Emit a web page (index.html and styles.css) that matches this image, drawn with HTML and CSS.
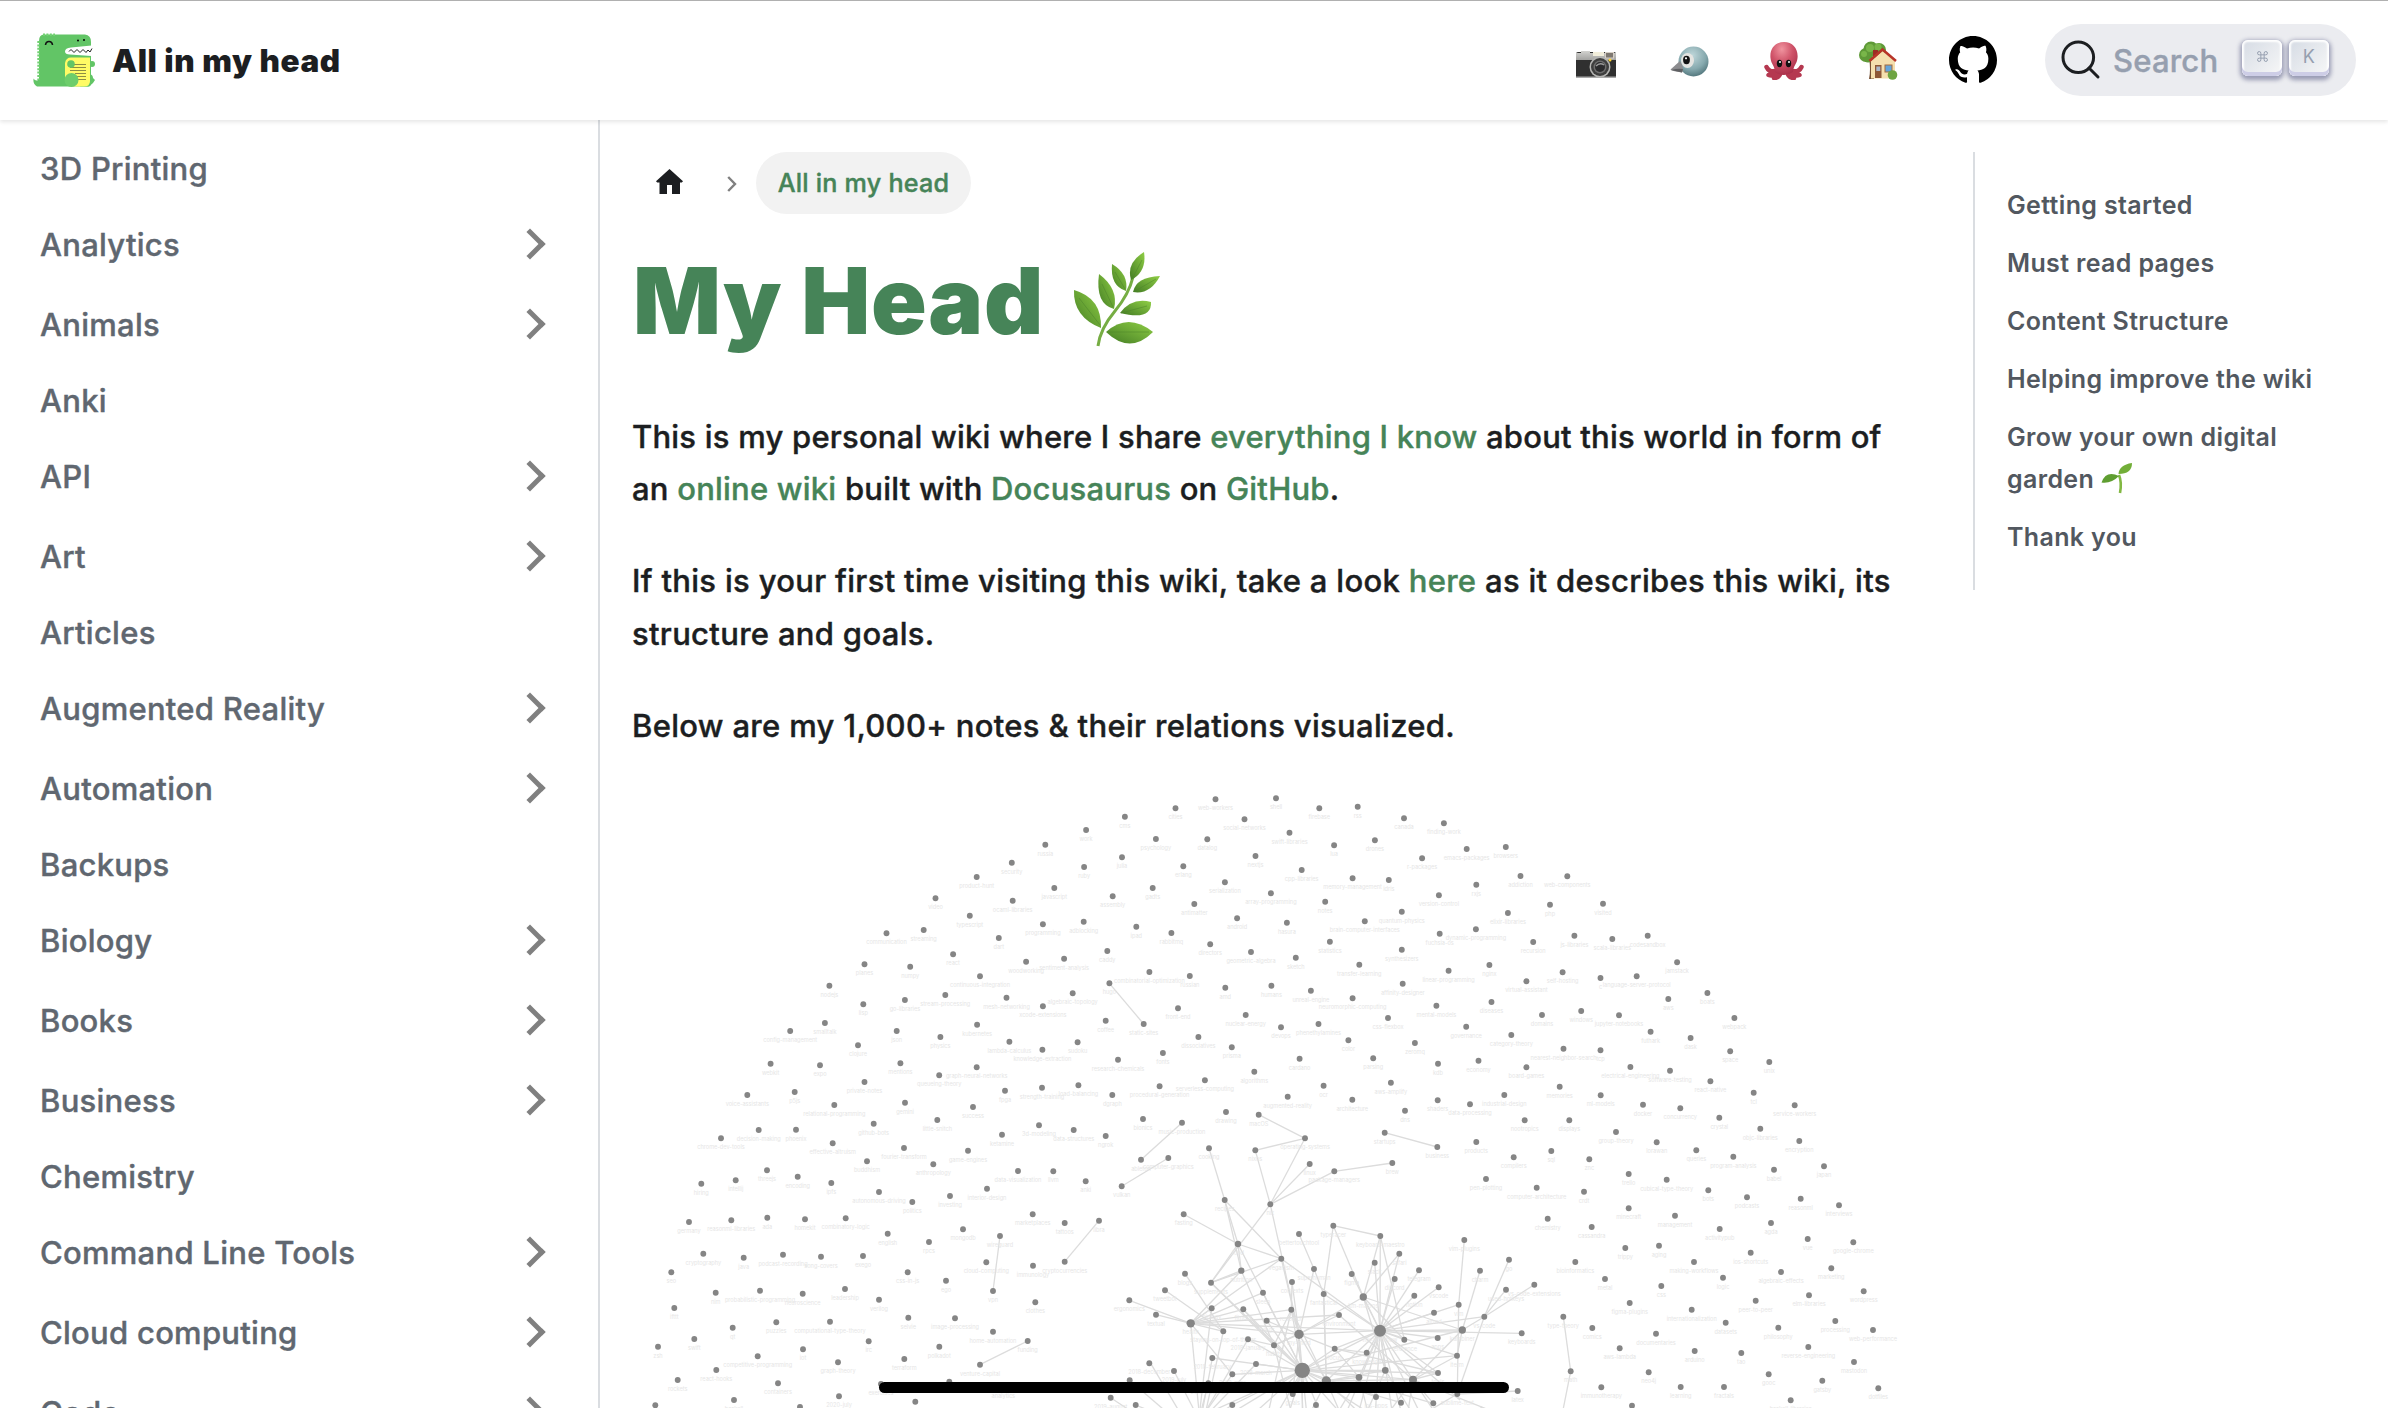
FILE: index.html
```html
<!DOCTYPE html>
<html lang="en">
<head>
<meta charset="utf-8">
<title>All in my head</title>
<link rel="stylesheet" href="styles.css">
</head>
<body>
<header class="navbar">
  <a class="brand">
    <svg class="brand-logo" viewBox="0 0 62 54">
      <path d="M4 53.500C1 52 0 49 .5 45.500C2 47.500 4 48.500 6 46V8Q6 1.500 11 1.500H52Q58 2 58 9V52Q57 53.500 54 53.500Z" fill="#62c566"/>
      <path d="M5.500 8V47M10 1.700H22" fill="none" stroke="#72d172" stroke-width="2.400" stroke-dasharray="2 1.400"/>
      <path d="M58.500 12.500 38 14.500Q32 15 32 18.500Q32 21.500 37 21.500L58.500 23Z" fill="#fff"/>
      <path d="M36 18.500 38 16.500 41 19.500 44 16.500 47 19.500 50 16.500 53 19.500 55 17 57 19 59 15.500" fill="none" stroke="#222" stroke-width="1"/>
      <path d="M12.500 12Q13 8.500 16 8.500T19.500 12" fill="none" stroke="#111" stroke-width="1.600"/>
      <circle cx="45" cy="7.500" r="1"/><circle cx="51" cy="7" r="1"/>
      <circle cx="59" cy="31" r="3" fill="#62c566"/>
      <path d="M57 41Q60 42 60 45L62 47 60 50 56 53.500H47Z" fill="#62c566"/>
      <path d="M32 30Q33 24.500 38 24.500H57V48Q57 53.500 51 53.500H41Q34 53 32 46Z" fill="#fffb65"/>
      <path d="M36 31.500H53M37 34.500H53M37 37.500H53M42 40.500H53M44 43.500H53M45 46.500H53" stroke="#8d8d43" stroke-width="1.100"/>
      <circle cx="38" cy="31" r="3.800" fill="#62c566"/>
      <circle cx="38.500" cy="47" r="7" fill="#6dcd6b"/>
    </svg>
    <span class="brand-title">All in my head</span>
  </a>
  <nav class="nav-links">
    <svg class="emoji" viewBox="0 0 40 40">
      <defs><linearGradient id="silver" x2="0" y2="1"><stop stop-color="#d2d2cf"/><stop offset="1" stop-color="#a3a3a1"/></linearGradient></defs>
      <path d="M0 14Q0 12 2 12H38Q40 12 40 14V38H0Z" fill="#303030"/>
      <path d="M0 20V13H5V11H14V13H40V20Z" fill="url(#silver)"/>
      <path d="M0 37.200H40" stroke="#aaa" stroke-width="1.600"/>
      <rect x="17" y="12" width="11" height="4" fill="#f2eedb"/><rect x="29.500" y="12.500" width="8" height="5.500" fill="#7d7770" stroke="#d6cfc6"/>
      <circle cx="34" cy="20" r="1.500" fill="#ffd52f"/>
      <circle cx="24" cy="27" r="10.500" fill="#b5b5b3"/><circle cx="24" cy="27" r="9" fill="#3e3e3e"/><circle cx="24" cy="27" r="6.500" fill="#6e6e6e"/><circle cx="24" cy="27" r="5" fill="#2b2b2d"/>
      <path d="M20 26Q24 22 28 25" fill="none" stroke="#9b9b9b" stroke-width="1.500"/>
    </svg>
    <svg class="emoji" viewBox="0 0 40 40">
      <defs><radialGradient id="bird" cx=".45" cy=".3" r=".7"><stop stop-color="#bfd7da"/><stop offset=".65" stop-color="#86a9ae"/><stop offset="1" stop-color="#55797f"/></radialGradient></defs>
      <circle cx="23.500" cy="21.500" r="15" fill="url(#bird)"/>
      <path d="M10 21 .5 29.500Q1 31 12 32.500Q15 28 10 21Z" fill="#8c8c8f"/><path d="M1 30Q8 28 13 29L12 32.500Z" fill="#5f6063"/>
      <ellipse cx="17.500" cy="20.500" rx="6.500" ry="7.500" fill="#e4e4e1"/><ellipse cx="16.500" cy="20" rx="3.400" ry="4.200" fill="#111"/><circle cx="16" cy="18.300" r="1.100" fill="#fff"/>
    </svg>
    <svg class="emoji" viewBox="0 0 40 40">
      <defs><radialGradient id="octo" cx=".42" cy=".22" r=".8"><stop stop-color="#f0949f"/><stop offset=".5" stop-color="#cf5268"/><stop offset="1" stop-color="#a92f49"/></radialGradient></defs>
      <g fill="none" stroke="#b53850" stroke-linecap="round" stroke-width="4.500"><path d="M14 30Q6 34 2.500 27M26 30Q34 34 37.500 27M14 31Q10 37 4.500 35M26 31Q30 37 35.500 35M17 31Q16 38 10 38M23 31Q24 38 30 38"/></g>
      <path d="M20 2C11 2 5.500 9 6.500 18C7 24 11 26 11 32Q20 38 29 32C29 26 33 24 33.500 18C34.500 9 29 2 20 2Z" fill="url(#octo)"/>
      <ellipse cx="15.500" cy="23.500" rx="2.700" ry="3.700" fill="#111"/><ellipse cx="24.500" cy="23.500" rx="2.700" ry="3.700" fill="#111"/><circle cx="16" cy="22" r="1" fill="#fff"/><circle cx="25" cy="22" r="1" fill="#fff"/>
    </svg>
    <svg class="emoji" viewBox="0 0 40 40">
      <path d="M11 18H16V39H11Q13 30 11 18Z" fill="#765034"/>
      <g fill="#5f9a38"><circle cx="8" cy="15" r="7"/><circle cx="13" cy="9" r="7.500"/><circle cx="21" cy="10" r="7"/><circle cx="10" cy="18" r="4.500"/></g>
      <g fill="#79b64a"><circle cx="12" cy="8" r="4"/><circle cx="20" cy="7" r="3.500"/><circle cx="6" cy="14" r="3"/></g>
      <rect x="15" y="10" width="5" height="8" fill="#9b2c24"/>
      <path d="M13 21 24.500 11 37 21V38.500H13Z" fill="#f4dfae"/>
      <path d="M11.500 21 24.500 9.500 38 21" fill="none" stroke="#b83428" stroke-width="2.500"/>
      <rect x="17" y="25" width="6.500" height="13" fill="#8d5736"/><rect x="18.300" y="26.500" width="4" height="4.500" fill="#a9b6c8"/>
      <rect x="27" y="25" width="7" height="7" fill="#63a4da" stroke="#a36b3c"/>
      <circle cx="34.500" cy="35" r="4.800" fill="#6ea442"/>
    </svg>
    <svg class="github" viewBox="0 0 16 16"><path d="M8 0C3.580 0 0 3.580 0 8c0 3.540 2.290 6.530 5.470 7.590.4.070.55-.17.55-.38 0-.19-.01-.82-.01-1.490-2.010.37-2.530-.49-2.690-.94-.09-.23-.48-.94-.82-1.130-.28-.15-.68-.52-.01-.53.63-.01 1.080.58 1.230.82.72 1.210 1.870.87 2.330.66.07-.52.28-.87.51-1.070-1.780-.2-3.640-.89-3.640-3.950 0-.87.31-1.590.82-2.150-.08-.2-.36-1.020.08-2.120 0 0 .67-.21 2.200.82.64-.18 1.320-.27 2-.27s1.360.09 2 .27c1.530-1.040 2.200-.82 2.200-.82.44 1.100.16 1.920.08 2.120.51.56.82 1.270.82 2.150 0 3.070-1.870 3.750-3.650 3.950.29.25.54.73.54 1.480 0 1.070-.01 1.930-.01 2.200 0 .21.15.46.55.38A8.010 8.010 0 0 0 16 8c0-4.420-3.580-8-8-8z"/></svg>
  </nav>
  <button class="search">
    <svg class="search-icon" viewBox="0 0 40 40"><circle cx="17.300" cy="17.300" r="15.300"/><path d="M28 28 37 37"/></svg>
    <span class="search-label">Search</span>
    <span class="keys"><kbd class="key"><svg class="command" viewBox="0 0 10 10"><path d="M3.500 3.500H6.500V6.500H3.500ZM3.500 3.500V2A1.500 1.500 0 1 0 2 3.500ZM6.500 3.500H8A1.500 1.500 0 1 0 6.500 2ZM6.500 6.500V8A1.500 1.500 0 1 0 8 6.500ZM3.500 6.500H2A1.500 1.500 0 1 0 3.500 8Z"/></svg></kbd><kbd class="key">K</kbd></span>
  </button>
</header>

<div class="layout">
  <aside class="sidebar">
    <ul class="menu">
      <li class="leaf">3D Printing</li>
      <li class="category">Analytics</li>
      <li class="category">Animals</li>
      <li class="leaf">Anki</li>
      <li class="category">API</li>
      <li class="category">Art</li>
      <li class="leaf">Articles</li>
      <li class="category">Augmented Reality</li>
      <li class="category">Automation</li>
      <li class="leaf">Backups</li>
      <li class="category">Biology</li>
      <li class="category">Books</li>
      <li class="category">Business</li>
      <li class="leaf">Chemistry</li>
      <li class="category">Command Line Tools</li>
      <li class="category">Cloud computing</li>
      <li class="category">Code</li>
    </ul>
  </aside>

  <main class="content">
    <nav class="breadcrumbs">
      <svg class="home" viewBox="0 0 27 25"><path d="M13.500 0 27 12.300 25.800 13.500H24V25H16V16H11V25H3.500V13.500H1.200L0 12.300Z"/></svg>
      <svg class="crumb-arrow" viewBox="0 0 10 16"><path d="M1.200 1 8 8 1.200 15"/></svg>
      <span class="crumb">All in my head</span>
    </nav>
    <h1 class="title">My Head
      <svg class="herb" viewBox="0 0 88 96">
        <defs><linearGradient id="leaf" x1="1" x2="0" y2="1"><stop stop-color="#8fce45"/><stop offset="1" stop-color="#437c24"/></linearGradient></defs>
        <path d="M25 94Q27 77 42 59Q56 42 60 25" fill="none" stroke="#76ad43" stroke-width="3"/>
        <g fill="url(#leaf)">
          <path d="M71 0Q74 20 58 28Q53 11 71 0Z"/>
          <path d="M39 12Q56 22 53 39Q37 34 39 12Z"/>
          <path d="M87 24Q77 43 60 40Q63 25 87 24Z"/>
          <path d="M26 22Q46 37 41 57Q22 52 26 22Z"/>
          <path d="M1 38Q29 46 28 76Q0 65 1 38Z"/>
          <path d="M47 61Q59 45 78 50Q79 69 47 61Z"/>
          <path d="M33 80Q55 60 80 80Q57 103 33 80Z"/>
        </g>
        <path d="M59 27 69 8M52 37 42 20M62 39 83 27M40 55 29 32M27 73 6 46M48 61 74 54M34 80 76 80" stroke="#4c8429" stroke-opacity=".5" fill="none"/>
      </svg>
    </h1>
    <p class="text">This is my personal wiki where I share <a>everything I know</a> about this world in form of<br>an <a>online wiki</a> built with <a>Docusaurus</a> on <a>GitHub</a>.</p>
    <p class="text text-wide">If this is your first time visiting this wiki, take a look <a>here</a> as it describes this wiki, its<br>structure and goals.</p>
    <p class="text text-wide">Below are my 1,000+ notes &amp; their relations visualized.</p>
    <svg class="graph" id="graph" viewBox="633 770 1290 638"></svg>
  </main>

  <aside class="toc">
    <ul class="toc-list">
      <li>Getting started</li>
      <li>Must read pages</li>
      <li>Content Structure</li>
      <li>Helping improve the wiki</li>
      <li>Grow your own digital<br>garden <svg class="seedling" viewBox="0 0 32 32"><path d="M19 31Q21 20 18 13" fill="none" stroke="#82b842" stroke-width="2.600"/><path d="M17.500 12Q18 3 31 1Q31 12 17.500 12Z" fill="#72ae38"/><path d="M18 14Q10 22 .5 20.500Q5 8 18 14Z" fill="#5f9e31"/></svg></li>
      <li>Thank you</li>
    </ul>
  </aside>
</div>
<div class="home-indicator"></div>
<script src="graph.js"></script>
</body>
</html>
```

FILE: styles.css
```css
* { box-sizing: border-box; }
body {
  margin: 0;
  width: 2388px;
  height: 1408px;
  overflow: hidden;
  position: relative;
  background: #fff;
  color: #1c1e21;
  font-family: Inter, "Liberation Sans", sans-serif;
  font-weight: 500;
}
ul { list-style: none; margin: 0; padding: 0; }

.navbar {
  position: relative;
  z-index: 1;
  display: flex;
  align-items: center;
  height: 120px;
  padding: 0 32px 0 33px;
  background: #fff;
  border-top: 1px solid #b0b0b0;
  box-shadow: 0 2px 4px rgba(0, 0, 0, .1);
}
.brand { display: flex; align-items: center; gap: 17px; margin-top: -1px; }
.brand-logo { width: 62px; height: 54px; }
.brand-title { font-size: 31.500px; font-weight: 900; letter-spacing: .6px; }
.nav-links { display: flex; align-items: center; gap: 54px; margin-left: auto; margin-right: 48px; margin-top: -1px; }
.emoji { width: 40px; height: 40px; }
.github { width: 48px; height: 48px; margin-left: -3px; }

.search {
  display: flex;
  align-items: center;
  width: 311px;
  height: 72px;
  margin-top: -1px;
  padding: 0 27px 0 16px;
  border: 0;
  border-radius: 36px;
  background: #ebecf0;
  color: #969faf;
  font: 500 31px Inter, sans-serif;
  letter-spacing: .2px;
  -webkit-text-stroke: .4px;
}
.search-icon { width: 40px; height: 40px; fill: none; stroke: #1c1e21; stroke-width: 3; stroke-linecap: round; }
.search-label { margin-left: 12px; }
.keys { display: flex; gap: 7px; margin: -4px 0 0 auto; }
.key {
  display: flex;
  align-items: center;
  justify-content: center;
  width: 40px;
  height: 36px;
  padding-bottom: 4px;
  border-radius: 6px;
  background: linear-gradient(-225deg, #d5dbe4, #f8f8f8);
  box-shadow: inset 0 -4px 0 0 #cdcde6, inset 0 0 2px 2px #fff, 0 2px 4px 2px rgba(30, 35, 90, .4);
  font: 400 18px Inter, sans-serif;
  -webkit-text-stroke: 0;
}
.command { width: 11px; height: 11px; fill: none; stroke: #969faf; stroke-width: .9; }

.layout { display: flex; height: 1288px; }
.sidebar { width: 600px; flex: none; padding: 16px 48px 0 40px; border-right: 2px solid #dadde1; overflow: hidden; }
.menu { display: flex; flex-direction: column; gap: 8px; color: #606770; font-size: 31px; letter-spacing: .27px; -webkit-text-stroke: .4px; }
.leaf, .category { display: flex; align-items: center; justify-content: space-between; flex: none; }
.leaf { height: 64px; }
.category { height: 72px; }
.category::after {
  content: "";
  box-sizing: border-box;
  width: 22px;
  height: 22px;
  margin-right: 9px;
  border: solid #808080;
  border-width: 5px 5px 0 0;
  transform: rotate(45deg);
}

.content { width: 1373px; flex: none; padding: 32px 0 0 33px; }
.breadcrumbs { display: flex; align-items: center; height: 62px; padding-left: 23px; font-size: 25.200px; letter-spacing: .2px; }
.home { width: 27px; height: 25px; margin-top: -3px; fill: #1c1e21; }
.crumb-arrow { width: 10px; height: 16px; margin: 2px 19px 0 44px; fill: none; stroke: #808080; stroke-width: 2.400; }
.crumb { width: 215px; text-align: center; line-height: 62px; border-radius: 31px; background: #f2f2f2; color: #468458; -webkit-text-stroke: .4px; }
.title { display: flex; align-items: center; width: 528px; height: 108px; margin: 32px 0 57px; color: #468458; font-size: 92px; font-weight: 900; letter-spacing: .7px; white-space: nowrap; }
.herb { width: 88px; height: 96px; margin-left: auto; flex: none; }
.text { margin: 0 0 40px -1px; font-size: 31px; line-height: 52.200px; letter-spacing: .22px; white-space: nowrap; -webkit-text-stroke: .4px; }
.text-wide { letter-spacing: .31px; }
.text a { color: #468458; }
.graph { display: block; width: 1290px; height: 638px; margin-top: -22px; }
.link { stroke: #dcdcdc; stroke-width: 1.300; }
.node { fill: #858585; }
.label { fill: #e6e6e6; font-size: 5.600px; font-weight: 400; text-anchor: middle; }

.toc { flex: none; padding-top: 32px; }
.toc-list { display: flex; flex-direction: column; gap: 16px; padding: 32px 0 32px 32px; border-left: 2px solid #dadde1; color: #525860; font-size: 25px; font-weight: 600; letter-spacing: .35px; line-height: 42px; }
.seedling { width: 32px; height: 32px; vertical-align: -6px; }

.home-indicator { position: absolute; z-index: 2; left: 879px; top: 1382px; width: 630px; height: 11px; border-radius: 6px; background: #000; }
```

FILE: graph.js
```js
// Each sector keeps its notes in local units: origin, units per pixel, "x y name [radius]".
const sectors = [
  { x: 640, y: 780, sx: 2.45, sy: 3, notes: `1410 58 web-workers|1312 85 cities|1188 110 cms|1093 150 work|993 194 russia|1481 118 social-networks|1264 177 psychology|1390 178 datalog|911 248 security|1181 232 julia|1088 261 ruby|1508 228 nextjs|1331 259 erlang|825 291 product-hunt|1015 324 javascript|1256 324 gadts|1433 307 serialization|724 355 video|913 362 ocaml-libraries|1158 349 assembly|1358 372 antimatter|808 407 typescript|987 433 programming|1087 425 adblocking|1216 440 ipad|1463 415 android|604 460 communication|695 450 streaming|879 474 dart|1302 459 rabbitmq|1397 493 directors|767 523 react|1145 513 caddy|1497 516 geometric-algebra|550 553 planes|662 560 numpy|946 545 woodworking|1039 536 sentiment-analysis|833 589 continuous-integration|1248 576 combinatorial-optimization|1347 588 russian|1150 610 hugo|464 617 nodejs|1434 623 amd|748 645 stream-processing|898 653 mesh-networking|1060 640 algebraic-topology|547 673 lisp|649 660 go-libraries|987 679 xcode-extensions|1318 685 front-end|1484 705 nuclear-energy|453 729 smalltalk|1141 722 coffee|1234 732 static-sites|826 734 kubernetes|368 753 config-management|629 753 json|736 771 physics|905 785 lambda-calculus|1072 787 sudoku|1368 771 dissociatives|534 796 clojure|986 809 knowledge-extraction|1450 802 prisma|1281 819 fonts|1171 839 research-chemicals|320 851 webkit|441 856 expo|638 850 mentions|825 862 graph-neural-networks|733 886 queueing-theory|1505 875 algorithms|550 906 private-notes|1384 901 serverless-computing|985 923 strength-training|1074 916 load-balancing|1273 919 procedural-generation` },
  { x: 1260, y: 780, sx: 2.3758, sy: 3, notes: `38 55 shell|141 85 firebase|232 80 rss|342 115 canada|437 130 finding-work|70 158 swift-libraries|176 196 lua|273 181 drones|491 207 emacs-packages|584 201 browsers|385 235 r-packages|99 270 cpp-libraries|220 295 memory-management|306 300 idris|619 288 addiction|730 289 web-components|514 314 rxjs|26 340 array-programming|425 346 version-control|155 365 notes|689 374 php|815 371 visited|337 395 quantum-physics|589 399 elixir-libraries|64 428 hasura|249 424 brain-computer-interfaces|513 448 dynamic-programming|427 461 fuchsia-os|166 485 statistics|649 486 recursion|747 467 js-libraries|837 477 scala-libraries|921 467 codesandbox|337 509 synthesizers|85 533 sketch|236 554 transfer-learning|545 555 nginx|991 547 jamstack|448 572 linear-programming|719 577 self-hosting|633 604 virtual-assistant|809 594 c|895 589 language-server-protocol|27 617 humans|339 611 affinity-designer|121 632 unreal-engine|220 655 neuromorphic-computing|550 666 diseases|970 657 aws|1063 639 boats|419 677 mental-models|670 705 domains|763 693 windows|853 706 jupyter-notebooks|304 714 css-flexbox|1127 714 webpack|139 732 phenethylamines|50 742 devops|490 740 governance|928 755 futhark|597 765 category-theory|1023 774 dask|210 781 color|368 789 zeromq|721 806 nearest-neighbor-search|809 811 tcp|1117 814 space|94 836 cardano|269 835 parsing|519 842 economy|423 851 kdb|633 862 board-games|1210 846 unix|880 861 electrical-engineering|974 872 software-testing|1070 904 react-native|151 917 ocr|311 908 aws-amplify|712 920 memories` },
  { x: 640, y: 1090, sx: 3, sy: 3, notes: `322 15 voice-assistants|464 6 p5js|583 45 relational-programming|795 38 gemini|1095 2 fpga|999 51 success|892 90 little-snitch|701 101 github-bots|356 120 decision-making|468 119 phoenix|243 145 chrome-dev-tools|578 160 effective-altruism|792 174 fourier-transform|1086 134 ketamine|1197 106 3d-modeling|984 182 game-engines|681 214 buddhism|880 223 anthropology|381 241 threejs|473 260 encoding|287 271 intellij|184 281 hiring|574 279 ipfs|1134 243 data-visualization|1240 244 llvm|717 306 autonomous-driving|817 336 politics|1041 296 interior-design|930 318 investing|147 396 germany|274 391 reasonml-libraries|382 383 ada|495 388 homekit|617 385 combinatory-logic|1178 373 marketplaces|743 431 english|969 418 mongodb|867 456 rpcs|1080 438 wireguard|190 491 cryptography|311 503 java|429 494 podcast-recording|543 500 song-covers|669 498 exego|1039 517 cloud-computing|1179 527 immunology|94 547 seo|803 547 css-in-js|918 572 ego|1059 603 vpn|227 608 nim|360 602 probabilistic-programming|488 611 neuroscience|615 597 leadership|717 629 verilog|1186 637 clothes|103 654 ifttt|805 683 selvie|945 685 image-processing|278 713 qt|409 697 puzzles|570 695 computational-type-theory|1059 725 home-automation|163 747 swift|54 770 zsh|686 754 irc|1163 753 funding|489 778 iot|898 770 polkadot|353 799 competitive-programming|793 807 terraform|1020 824 venture-capital|594 817 graph-theory|229 840 react-hooks|113 870 rockets|414 880 containers|723 882 exercises|928 875 |1090 892 analytics 0|282 930 haskell|597 919 2020-july|46 946 |480 951 |826 935 ` },
  { x: 1060, y: 1090, sx: 3, sy: 3, notes: `157 15 dgraph|683 20 augmented-reality|877 29 architecture|1133 31 shaders|1230 43 data-processing|1035 62 dns|498 66 drawing|596 74 macOS|249 87 bionics|366 98 music-production|41 120 data-structures|137 138 ngrok|735 145 operating-systems|974 128 startups|1132 171 business|1249 156 products|447 175 cooking|586 181 nixos|243 209 ableton|325 204 computer-graphics|749 222 linux|823 244 package-managers|997 219 brew|77 274 anki|185 289 vulkan|494 330 recipes|631 343 nix|371 373 fasting|14 399 tattoos|117 392 libra|14 515 cryptocurrencies|820 407 typeracer|717 432 bettertouchtool|961 438 keyboard-maestro|1213 450 vim-plugins|534 462 food 9.5|664 506 veganism|544 542 nutrition 9.5|453 578 supplements|375 551 blogs|315 601 tweetbot|208 631 ergonomics|288 674 textual|455 655 biology|550 658 fitness|609 608 sleep|696 576 contexts|762 537 superhuman|875 552 figma|944 518 slack|1018 491 safari|1077 541 telegram|1004 567 discord|910 621 km-macros 11|1063 617 notion|1136 592 vscode|791 612 fantastical|694 659 research|837 675 environment|392 700 health 12.5|490 724 staying-on-top-of-things|564 748 2018-january|620 692 things|642 766 habits 9|717 733 my-mind 14|960 722 my-workflow 18|1033 749 reference|1122 668 alfred|1196 644 vim|1273 680 vs-code|1207 720 karabiner 11|1133 744 apps|920 788 knowledge|824 776 focus|1191 797 iterm|976 841 learn 10|897 862 ideas 10|727 841 wiki 23|1134 849 tools|1059 869 macos-apps 12|799 873 mac 14|457 804 2018-february|588 822 2018-march|517 853 2018-may|342 843 2019-july|268 820 2018-december|209 871 2018|445 880 2018-october|152 923 2019-august|227 945 now|517 945 2018-april|698 912 goals|768 945 year|948 921 ios-apps|1023 938 web|1120 940 editors|1192 912 sublime-text|1260 542 charm|1373 903 latex` },
  { x: 1480, y: 1090, sx: 3, sy: 3, notes: `73 15 industrial-design|362 16 ml-models|489 44 docker|601 55 concurrency|821 8 tcl|944 46 service-workers|718 83 crystal|134 91 nootropics|268 91 displays|408 126 group-theory|841 116 objc-libraries|530 157 lorawan|958 153 encryption|649 181 queries|214 183 sql|101 202 compilers|328 208 znc|760 200 program-analysis|1032 229 japan|882 239 babel|446 252 trello|18 267 pen-plotting|560 269 cubical-type-theory|170 293 computer-architecture|312 305 crdt|685 301 bots|801 322 podcasts|962 326 reasonml|1077 346 interviews|446 355 minecraft|203 386 chemistry|585 377 management|335 411 cassandra|719 417 activitypub|873 399 agda|983 447 vue|1120 457 google-chrome|436 474 trippy|537 467 aging|812 488 ios-shortcuts|87 509 go|286 516 bioinformatics|642 516 making-workflows|375 567 metal|729 563 logic|903 546 algebraic-effects|1054 535 marketing|163 584 vs-code-extensions|78 599 used-hotkeys|544 588 css|1151 604 wordpress|449 639 figma-plugins|827 632 peer-to-peer|987 616 elm-libraries|635 659 internationalization|250 680 type-theory|337 714 comics|737 698 datasets|895 713 philosophy|1066 693 processing|1179 720 web-performance|125 730 keyboards|528 731 documentaries|419 775 aws-lambda|644 783 arduino|784 789 tao|985 771 reverse-engineering|1122 816 mastodon|272 844 math|506 847 neo4j|866 853 gooc|1027 872 gatsby|364 892 immunotherapy|602 891 learning|732 891 fractals|1195 895 dotfiles|456 947 |932 931 haskell-libraries` }
];

// Relations between notes, by name.
const relations = {
  hugo: 'static-sites', wireguard: 'vpn', funding: 'venture-capital', cryptocurrencies: 'libra',
  'music-production': 'ableton', 'computer-graphics': 'vulkan', startups: 'business',
  'operating-systems': 'macOS nixos nix', nix: 'nixos linux package-managers supplements my-mind', 'package-managers': 'brew',
  cooking: 'recipes', recipes: 'food nutrition veganism', fasting: 'food',
  food: 'nutrition veganism supplements wiki', veganism: 'supplements my-mind my-workflow health', nutrition: 'supplements health habits',
  health: 'fitness sleep biology ergonomics textual staying-on-top-of-things 2018-may my-mind my-workflow research environment',
  supplements: 'habits wiki', blogs: 'staying-on-top-of-things', tweetbot: 'staying-on-top-of-things',
  typeracer: 'keyboard-maestro km-macros fantastical', 'keyboard-maestro': 'km-macros my-workflow reference',
  'km-macros': 'safari my-workflow my-mind karabiner reference learn',
  'my-workflow': 'slack safari telegram discord notion vscode fantastical figma alfred vim vs-code karabiner apps reference knowledge iterm tools macos-apps ideas learn focus keyboards wiki my-mind mac',
  bettertouchtool: 'superhuman', superhuman: 'fantastical my-mind', contexts: 'research my-mind', 'vim-plugins': 'vim', vim: 'sublime-text',
  karabiner: 'charm iterm macos-apps', 'vs-code': 'go used-hotkeys vs-code-extensions karabiner sublime-text',
  wiki: 'my-mind habits things fitness sleep research focus learn ideas mac tools iterm 2018-february 2018-march 2018-may 2018-april goals 2018-january macos-apps karabiner ios-apps',
  'my-mind': 'research focus mac things habits goals', mac: 'fantastical research learn macos-apps ideas goals web',
  focus: 'knowledge ideas tools', habits: 'fitness research environment 2018-january', 'macos-apps': 'environment tools iterm editors',
  'sublime-text': 'latex', 'type-theory': 'math'
};

// Relations that continue below the visible part of the canvas, as "x1 y1 x2 y2".
const trailing = `272 820 364 975|342 843 410 975|209 871 330 975|392 700 418 975|455 655 418 975|490 724 435 975|564 748 430 975|457 804 425 975|517 853 430 975|517 945 470 975|588 822 440 975|727 841 430 975|727 841 480 990|727 841 560 990|727 841 640 990|727 841 680 990|727 841 727 990|727 841 742 990|727 841 790 990|727 841 860 990|727 841 960 990|717 733 730 990|799 873 740 990|799 873 850 990|799 873 920 990|897 862 820 990|897 862 930 990|960 722 850 990|960 722 890 990|960 722 945 990|960 722 1000 990|960 722 1030 990|960 722 1090 990|960 722 1200 930|976 841 910 990|976 841 1070 990|1059 869 1040 990|1059 869 1130 975|1059 869 1300 965|1059 869 970 990|1192 912 1060 990|152 923 230 975|227 945 300 975|642 766 700 990|694 659 620 990|791 612 799 873|445 880 420 975|1120 940 880 870|1260 950 1320 975|1532 844 1508 965`;

const notes = new Map();
let dots = '', labels = '', lines = '';
for (const s of sectors) {
  for (const row of s.notes.split('|')) {
    const [px, py, name, size] = row.split(' ');
    const x = +(s.x + px / s.sx).toFixed(1), y = +(s.y + py / s.sy).toFixed(1);
    if (name) notes.set(name, [x, y]);
    dots += `<circle class="node" cx="${x}" cy="${y}" r="${(size || 8.8) / 3}"/>`;
    if (name && y < 1402) labels += `<text class="label" x="${x}" y="${y + 11}">${name}</text>`;
  }
}
const line = (x1, y1, x2, y2) => { lines += `<line class="link" x1="${x1}" y1="${y1}" x2="${x2}" y2="${y2}"/>`; };
for (const [from, targets] of Object.entries(relations)) {
  for (const to of targets.split(' ')) {
    if (notes.has(from) && notes.has(to)) line(...notes.get(from), ...notes.get(to));
  }
}
for (const t of trailing.split('|')) {
  const [a, b, c, d] = t.split(' ').map(Number);
  line(1060 + a / 3, 1090 + b / 3, 1060 + c / 3, 1090 + d / 3);
}
document.getElementById('graph').innerHTML = lines + labels + dots;
```
